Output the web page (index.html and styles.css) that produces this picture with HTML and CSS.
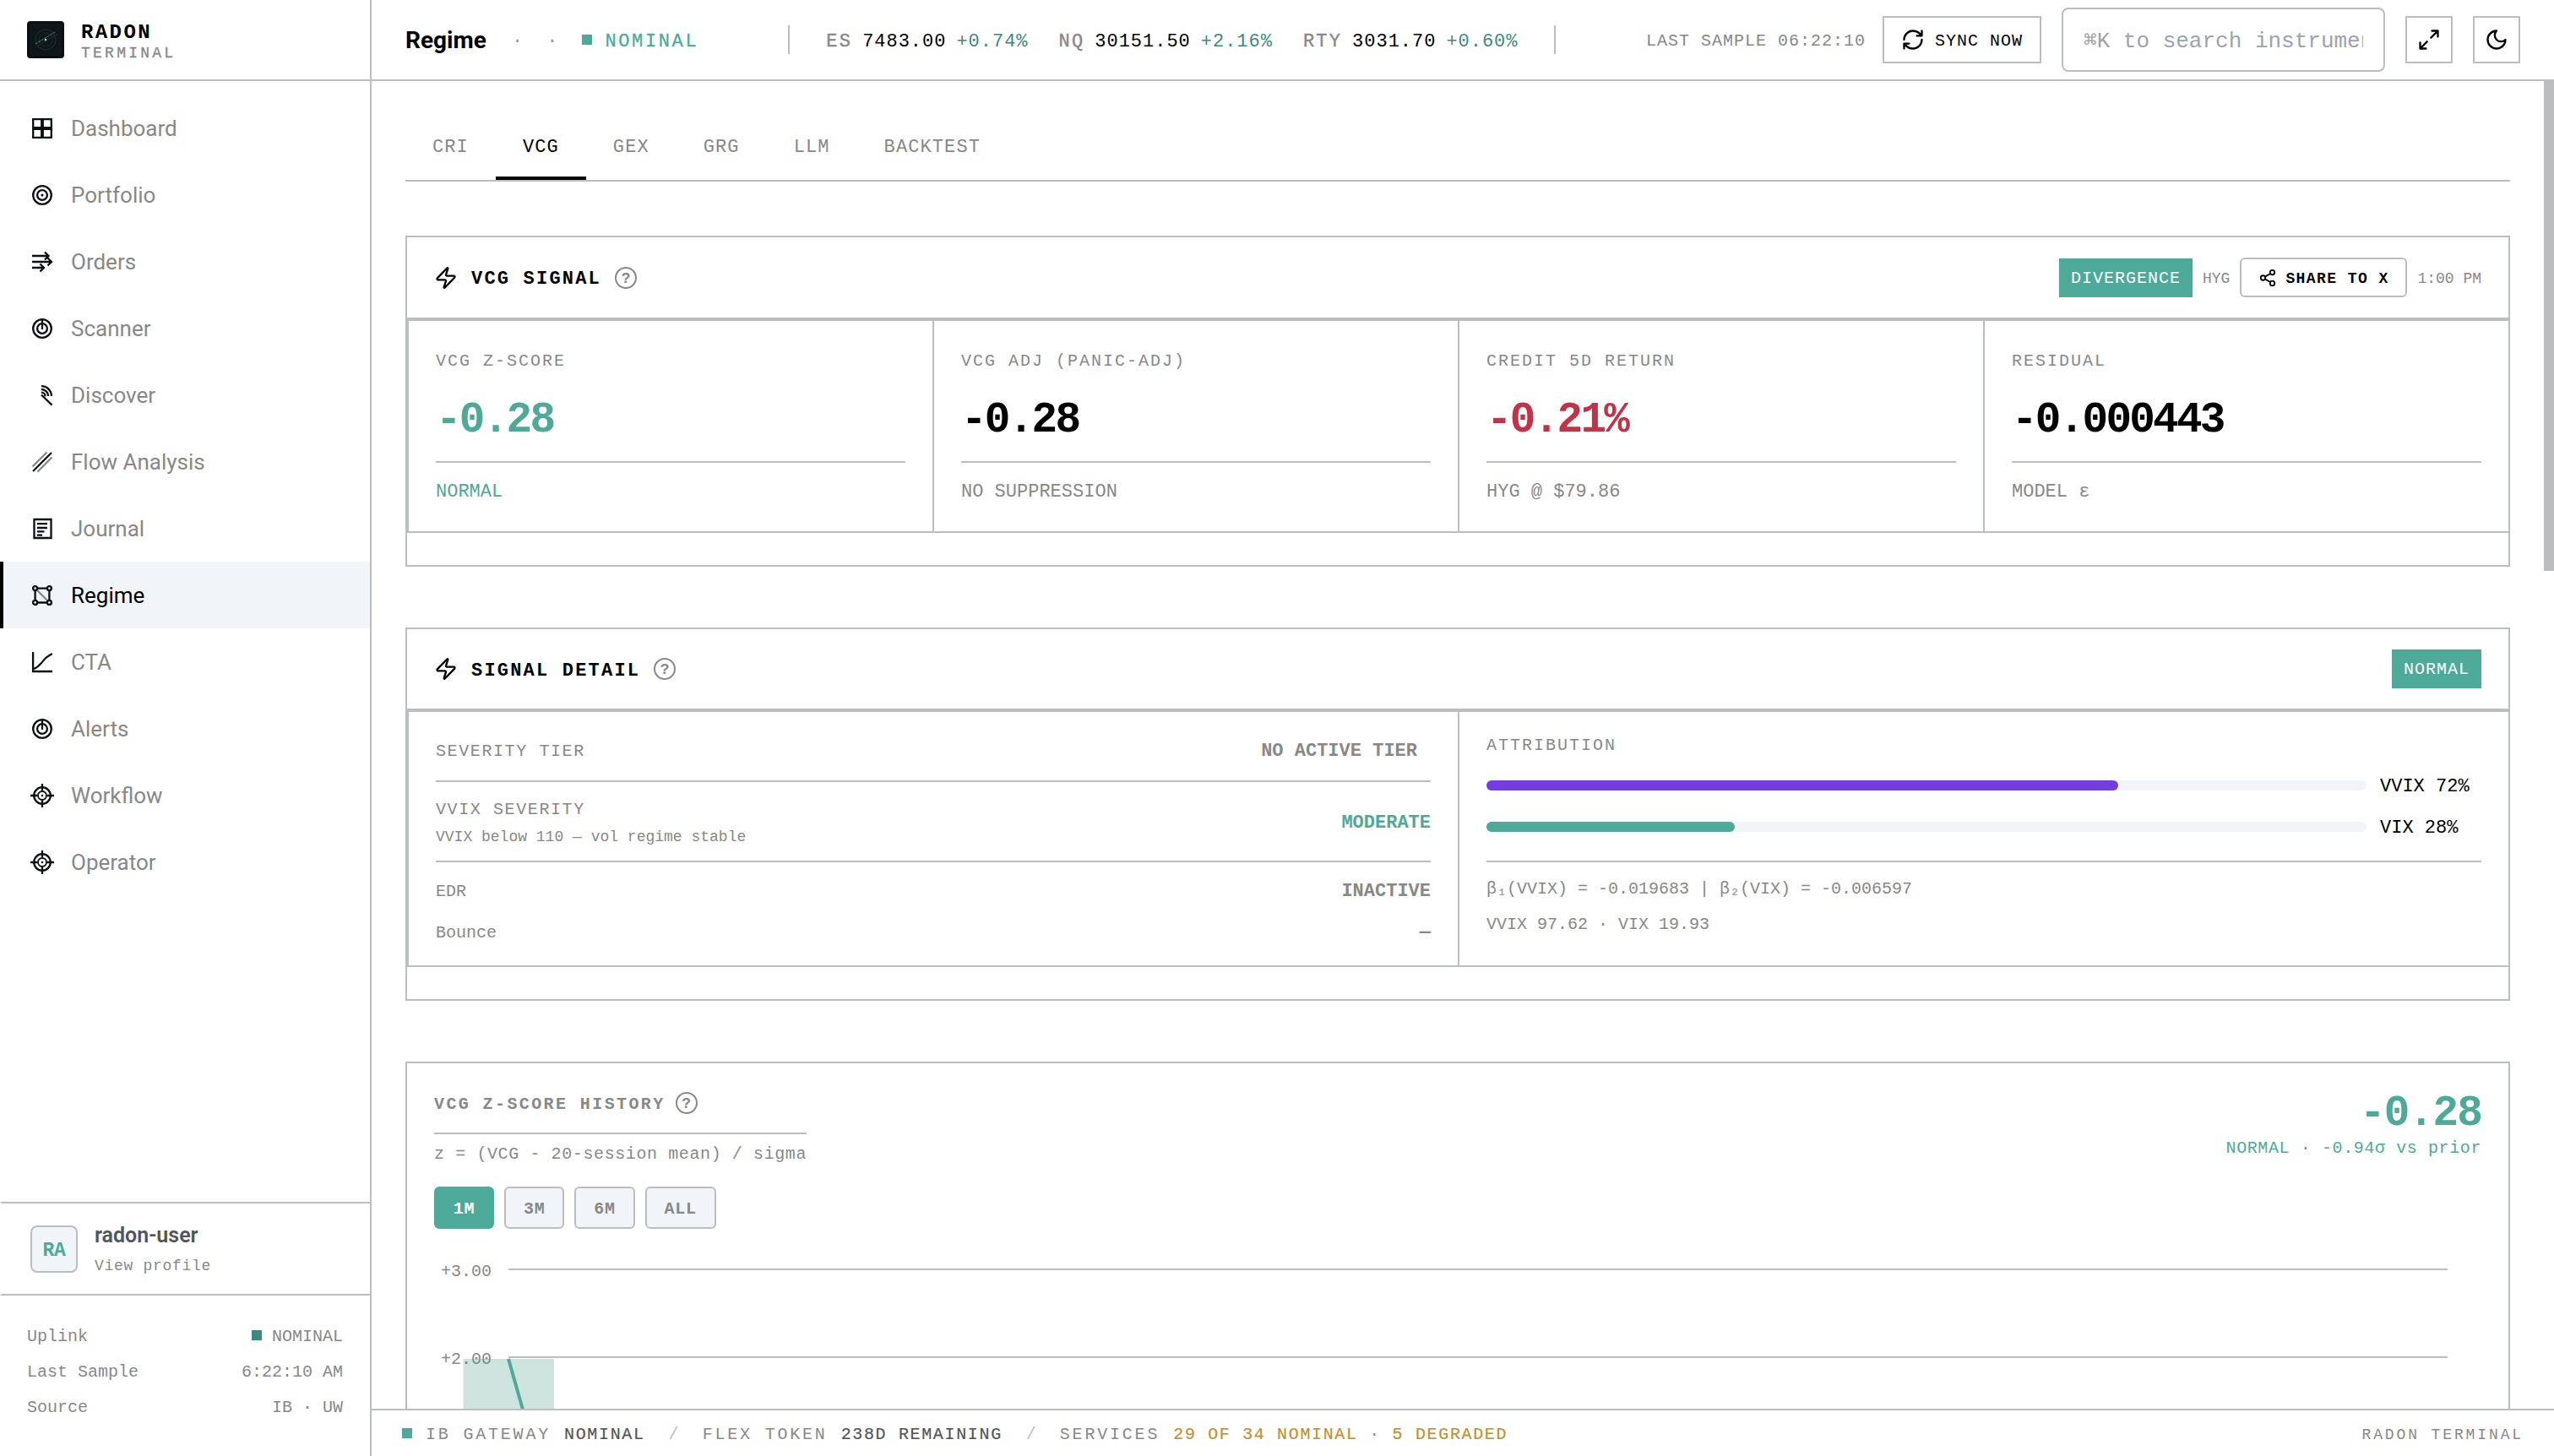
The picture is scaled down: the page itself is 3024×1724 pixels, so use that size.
FILE: index.html
```html
<!DOCTYPE html>
<html lang="en">
<head>
    <meta charset="UTF-8">
    <meta name="viewport" content="width=device-width, initial-scale=1.0">
    <title>Radon Terminal - Regime</title>
    <link rel="stylesheet" href="styles.css">
</head>
<body>
    <div class="app">
        <!-- sidebar -->
        <aside class="sidebar">
            <div class="brand">
                <svg class="logo" viewBox="0 0 44 44">
                    <rect width="44" height="44" rx="4" fill="#0a0f14"/>
                    <rect x="3" y="3" width="38" height="38" rx="2" fill="#0f1519"/>
                    <circle cx="22" cy="22" r="12" fill="none" stroke="#16392f"/>
                    <circle cx="22" cy="22" r="8" fill="none" stroke="#162b29"/>
                    <path d="M13 29L37 15" stroke="#33285a" stroke-dasharray="3 1"/>
                    <path d="M10 27L34 12.500" stroke="#2b7a69" stroke-width="1.200" stroke-dasharray="3 1"/>
                    <circle cx="22" cy="22" r="1.200" fill="#d5dede"/>
                </svg>
                <div class="brand_text">
                    <div class="brand_name">RADON</div>
                    <div class="brand_sub">TERMINAL</div>
                </div>
            </div>
            <nav class="nav">
                <a class="nav_item">
                    <svg viewBox="0 0 28 28"><path d="M3.200 3.200h21.600v21.600H3.200z"/><path d="M14 3v22M3 14h22" stroke-width="3.800"/></svg>
                    Dashboard
                </a>
                <a class="nav_item">
                    <svg viewBox="0 0 28 28"><circle cx="14" cy="14" r="10.800"/><circle cx="14" cy="14" r="5.900"/><circle class="dot" cx="14" cy="14" r="1.600"/></svg>
                    Portfolio
                </a>
                <a class="nav_item">
                    <svg viewBox="0 0 28 28"><path d="M2 7h20M17 2.500L21.500 7 17 11.500M2 14h23M20.500 9.500L25 14l-4.500 4.500M2 21h14M11.500 16.500L16 21l-4.500 4.500"/></svg>
                    Orders
                </a>
                <a class="nav_item">
                    <svg viewBox="0 0 28 28"><circle cx="14" cy="14" r="10.800"/><circle cx="14" cy="14" r="5.900"/><path d="M14 4v11"/></svg>
                    Scanner
                </a>
                <a class="nav_item">
                    <svg viewBox="0 0 28 28"><path d="M13 3.200A12 12 0 0 1 25 15M13 7A8.300 8.300 0 0 1 21.300 15M13 10.600A4.600 4.600 0 0 1 17.600 15.200M13 13.500L25.600 25.600"/></svg>
                    Discover
                </a>
                <a class="nav_item">
                    <svg viewBox="0 0 28 28"><path class="faint" d="M2.500 19.500l17-17M8.500 25.500l17-17"/><path d="M3 25L25 3"/></svg>
                    Flow Analysis
                </a>
                <a class="nav_item">
                    <svg viewBox="0 0 28 28"><path d="M4.500 3h20v22h-20zM8 8.200h12M8 13h12M8 17.300h8.500M8 21.600h6"/></svg>
                    Journal
                </a>
                <a class="nav_item active">
                    <svg viewBox="0 0 28 28"><path class="faint" d="M7.500 7.500l13 13"/><path d="M8.500 5.600h11M8.500 22.500h11M5.600 8.500v11M22.400 8.500v11"/><circle cx="5.600" cy="5.600" r="2.500"/><circle cx="22.400" cy="5.600" r="2.500"/><circle cx="5.600" cy="22.400" r="2.500"/><circle cx="22.400" cy="22.400" r="2.500"/></svg>
                    Regime
                </a>
                <a class="nav_item">
                    <svg viewBox="0 0 28 28"><path d="M3.100 2v23H26"/><path d="M3.500 22C8 21 10 18 13 15s4-6 8-8l4.800-3"/></svg>
                    CTA
                </a>
                <a class="nav_item">
                    <svg viewBox="0 0 28 28"><circle cx="14" cy="14" r="10.800"/><circle cx="14" cy="14" r="5.900"/><path d="M14 4v11"/></svg>
                    Alerts
                </a>
                <a class="nav_item">
                    <svg viewBox="0 0 28 28"><circle cx="14" cy="14" r="9.800"/><circle cx="14" cy="14" r="5" stroke-width="1.900"/><circle class="dot" cx="14" cy="14" r="1.300"/><path d="M14 0v8M14 20v8M0 14h8M20 14h8"/></svg>
                    Workflow
                </a>
                <a class="nav_item">
                    <svg viewBox="0 0 28 28"><circle cx="14" cy="14" r="9.800"/><circle cx="14" cy="14" r="5" stroke-width="1.900"/><circle class="dot" cx="14" cy="14" r="1.300"/><path d="M14 0v8M14 20v8M0 14h8M20 14h8"/></svg>
                    Operator
                </a>
            </nav>
            <div class="profile">
                <div class="avatar">RA</div>
                <div class="profile_text">
                    <div class="profile_name">radon-user</div>
                    <div class="profile_link">View profile</div>
                </div>
            </div>
            <div class="side_status">
                <div class="side_row"><span>Uplink</span><span class="side_value"><i class="square dark"></i>NOMINAL</span></div>
                <div class="side_row"><span>Last Sample</span><span>6:22:10 AM</span></div>
                <div class="side_row"><span>Source</span><span>IB · UW</span></div>
            </div>
        </aside>

        <div class="main">
            <!-- top bar -->
            <header class="topbar">
                <h1>Regime</h1>
                <span class="sep_dot">·</span>
                <span class="sep_dot">·</span>
                <div class="state"><i class="square"></i><span>NOMINAL</span></div>
                <div class="ticker">
                    <div class="quote"><span class="sym">ES</span><span class="px">7483.00</span><span class="chg">+0.74%</span></div>
                    <div class="quote"><span class="sym">NQ</span><span class="px">30151.50</span><span class="chg">+2.16%</span></div>
                    <div class="quote"><span class="sym">RTY</span><span class="px">3031.70</span><span class="chg">+0.60%</span></div>
                </div>
                <div class="tools">
                    <span class="sample">LAST SAMPLE 06:22:10</span>
                    <button class="sync">
                        <svg class="icon" viewBox="0 0 24 24"><path d="M3 12a9 9 0 0 1 9-9 9.750 9.750 0 0 1 6.740 2.740L21 8M21 3v5h-5M21 12a9 9 0 0 1-9 9 9.750 9.750 0 0 1-6.740-2.740L3 16M8 16H3v5"/></svg>
                        <span>SYNC NOW</span>
                    </button>
                    <input class="search" type="text" placeholder="⌘K to search instruments">
                    <button class="square_button"><svg class="icon" viewBox="0 0 24 24"><path d="M15 3h6v6M9 21H3v-6M21 3l-7 7M3 21l7-7"/></svg></button>
                    <button class="square_button"><svg class="icon" viewBox="0 0 24 24"><path d="M12 3a6 6 0 0 0 9 9 9 9 0 1 1-9-9Z"/></svg></button>
                </div>
            </header>

            <div class="scroller">
                <div class="content">
                    <div class="tabs">
                        <a class="tab">CRI</a>
                        <a class="tab active">VCG</a>
                        <a class="tab">GEX</a>
                        <a class="tab">GRG</a>
                        <a class="tab">LLM</a>
                        <a class="tab">BACKTEST</a>
                    </div>

                    <!-- VCG signal -->
                    <section class="card">
                        <div class="card_head">
                            <svg class="icon" viewBox="0 0 24 24"><path d="M4 14a1 1 0 0 1-.780-1.630l9.900-10.200a.5.5 0 0 1 .860.460l-1.920 6.020A1 1 0 0 0 13 10h7a1 1 0 0 1 .780 1.630l-9.900 10.200a.5.5 0 0 1-.860-.460l1.920-6.020A1 1 0 0 0 11 14z"/></svg>
                            <h2>VCG SIGNAL</h2>
                            <span class="help">?</span>
                            <div class="card_actions">
                                <span class="badge">DIVERGENCE</span>
                                <span class="small">HYG</span>
                                <button class="share">
                                    <svg class="icon" viewBox="0 0 24 24"><circle cx="18" cy="5" r="3"/><circle cx="6" cy="12" r="3"/><circle cx="18" cy="19" r="3"/><path d="M8.590 13.510l6.830 3.980M15.410 6.510l-6.820 3.980"/></svg>
                                    <span>SHARE TO X</span>
                                </button>
                                <span class="small">1:00 PM</span>
                            </div>
                        </div>
                        <div class="metrics">
                            <div class="metric">
                                <div class="label">VCG Z-SCORE</div>
                                <div class="value teal">-0.28</div>
                                <div class="note teal">NORMAL</div>
                            </div>
                            <div class="metric">
                                <div class="label">VCG ADJ (PANIC-ADJ)</div>
                                <div class="value">-0.28</div>
                                <div class="note">NO SUPPRESSION</div>
                            </div>
                            <div class="metric">
                                <div class="label">CREDIT 5D RETURN</div>
                                <div class="value red">-0.21%</div>
                                <div class="note">HYG @ $79.86</div>
                            </div>
                            <div class="metric">
                                <div class="label">RESIDUAL</div>
                                <div class="value">-0.000443</div>
                                <div class="note">MODEL ε</div>
                            </div>
                        </div>
                    </section>

                    <!-- signal detail -->
                    <section class="card">
                        <div class="card_head">
                            <svg class="icon" viewBox="0 0 24 24"><path d="M4 14a1 1 0 0 1-.780-1.630l9.900-10.200a.5.5 0 0 1 .860.460l-1.920 6.020A1 1 0 0 0 13 10h7a1 1 0 0 1 .780 1.630l-9.900 10.200a.5.5 0 0 1-.860-.460l1.920-6.020A1 1 0 0 0 11 14z"/></svg>
                            <h2>SIGNAL DETAIL</h2>
                            <span class="help">?</span>
                            <div class="card_actions"><span class="badge">NORMAL</span></div>
                        </div>
                        <div class="detail">
                            <div class="detail_col tiers">
                                <div class="tier first"><span class="tier_label">SEVERITY TIER</span><b class="inset">NO ACTIVE TIER</b></div>
                                <div class="tier second">
                                    <div>
                                        <div class="tier_label">VVIX SEVERITY</div>
                                        <div class="tier_note">VVIX below 110 — vol regime stable</div>
                                    </div>
                                    <b class="teal">MODERATE</b>
                                </div>
                                <div class="tier plain"><span>EDR</span><b>INACTIVE</b></div>
                                <div class="tier plain"><span>Bounce</span><b>—</b></div>
                            </div>
                            <div class="detail_col attribution">
                                <div class="label">ATTRIBUTION</div>
                                <div class="bar_row">
                                    <div class="track"><div class="fill violet" style="width:71.8%"></div></div>
                                    <span>VVIX 72%</span>
                                </div>
                                <div class="bar_row">
                                    <div class="track"><div class="fill" style="width:28.2%"></div></div>
                                    <span>VIX 28%</span>
                                </div>
                                <div class="betas">
                                    <div>β₁(VVIX) = -0.019683 | β₂(VIX) = -0.006597</div>
                                    <div>VVIX 97.62 · VIX 19.93</div>
                                </div>
                            </div>
                        </div>
                    </section>

                    <!-- z-score history -->
                    <section class="card history">
                        <div class="history_head">
                            <div>
                                <div class="history_title"><h3>VCG Z-SCORE HISTORY</h3><span class="help">?</span></div>
                                <div class="formula">z = (VCG - 20-session mean) / sigma</div>
                            </div>
                            <div class="reading">
                                <div class="reading_value">-0.28</div>
                                <div class="reading_note">NORMAL · -0.94σ vs prior</div>
                            </div>
                        </div>
                        <div class="ranges">
                            <button class="range active">1M</button>
                            <button class="range">3M</button>
                            <button class="range">6M</button>
                            <button class="range">ALL</button>
                        </div>
                        <svg class="chart" viewBox="0 0 2424 520">
                            <path class="grid" d="M88 48H2384M88 152H2384M88 256H2384M88 360H2384"/>
                            <text x="8" y="56">+3.00</text>
                            <text x="8" y="160">+2.00</text>
                            <rect class="band" x="34.500" y="154" width="107.500" height="360"/>
                            <path class="series" d="M88 154L105 214L142 350"/>
                        </svg>
                    </section>
                </div>
                <div class="scrollbar"><div class="thumb"></div></div>
            </div>

            <!-- status bar -->
            <footer class="statusbar">
                <i class="square"></i>
                <div class="status"><span>IB GATEWAY</span><b>NOMINAL</b></div>
                <span class="slash">/</span>
                <div class="status"><span>FLEX TOKEN</span><b>238D REMAINING</b></div>
                <span class="slash">/</span>
                <div class="status"><span>SERVICES</span><b class="amber">29 OF 34 NOMINAL · 5 DEGRADED</b></div>
                <span class="product">RADON TERMINAL</span>
            </footer>
        </div>
    </div>
</body>
</html>
```
FILE: styles.css
```css
*{
    box-sizing: border-box;
}
body{
    margin: 0;
    background-color: #fff;
    color: #000;
    font-family: "Liberation Mono", "DejaVu Sans Mono", monospace;
    font-size: 22px;
    overflow: hidden;
}
h1, h2, h3{
    margin: 0;
}
button{
    font-family: inherit;
    color: #000;
    background-color: #fff;
    border: 2px solid #babebe;
    display: flex;
    align-items: center;
    padding: 0;
}
.app{
    display: flex;
    width: 3024px;
    height: 1724px;
}
.icon{
    width: 28px;
    height: 28px;
    flex: none;
    fill: none;
    stroke: currentColor;
    stroke-width: 2;
    stroke-linecap: round;
    stroke-linejoin: round;
}
.square{
    width: 12px;
    height: 12px;
    flex: none;
    background-color: #4daa98;
}
.square.dark{
    background-color: #3d8a7c;
    margin-bottom: 4px;
}
.teal{
    color: #4daa98 !important;
}
.red{
    color: #c43247;
}

/* sidebar */
.sidebar{
    width: 440px;
    flex: none;
    display: flex;
    flex-direction: column;
    border-right: 2px solid #babebe;
}
.brand{
    height: 96px;
    padding: 0 32px;
    display: flex;
    align-items: center;
    gap: 20px;
    border-bottom: 2px solid #babebe;
}
.logo{
    width: 44px;
    height: 44px;
}
.brand_text{
    padding-top: 4px;
}
.brand_name{
    font-size: 24px;
    font-weight: bold;
    line-height: 27px;
    letter-spacing: 2.4px;
}
.brand_sub{
    font-size: 18px;
    line-height: 22px;
    letter-spacing: 3.24px;
    color: #888;
    -webkit-text-stroke: 0.3px #888;
}
.nav{
    flex: 1;
    padding-top: 16px;
}
.nav_item{
    height: 79px;
    padding-left: 32px;
    border-left: 4px solid transparent;
    display: flex;
    align-items: center;
    gap: 20px;
    font-family: Roboto, sans-serif;
    font-size: 26px;
    color: #888;
}
.nav_item svg{
    width: 28px;
    height: 28px;
    fill: none;
    stroke: #0a0f14;
    stroke-width: 2.3;
}
.nav_item .dot{
    fill: #0a0f14;
    stroke: none;
}
.nav_item .faint{
    stroke: #85878a;
}
.nav_item.active{
    color: #000;
    background-color: #f1f5fa;
    border-left-color: #000;
}
.profile{
    height: 111px;
    padding-left: 34px;
    display: flex;
    align-items: center;
    gap: 20px;
    border-top: 2px solid #babebe;
    border-bottom: 2px solid #babebe;
    border-left: 2px solid transparent;
}
.avatar{
    width: 56px;
    height: 56px;
    border: 2px solid #babebe;
    border-radius: 8px;
    background-color: #f1f5fa;
    color: #4daa98;
    font-size: 23px;
    font-weight: bold;
    line-height: 56px;
    letter-spacing: -0.4px;
    text-align: center;
}
.profile_text{
    padding-top: 2px;
}
.profile_name{
    font-family: Roboto, sans-serif;
    font-size: 25px;
    font-weight: 600;
    line-height: 30px;
    color: #555;
}
.profile_link{
    margin-top: 9px;
    font-size: 18px;
    line-height: 24px;
    letter-spacing: 0.7px;
    color: #888;
}
.side_status{
    height: 190px;
    padding: 28px 32px 0;
}
.side_row{
    display: flex;
    justify-content: space-between;
    font-size: 20px;
    line-height: 42px;
    color: #888;
}
.side_value{
    display: flex;
    align-items: center;
    gap: 12px;
}

/* top bar */
.main{
    flex: 1;
    min-width: 0;
    display: flex;
    flex-direction: column;
}
.topbar{
    height: 96px;
    flex: none;
    padding: 0 40px;
    display: flex;
    align-items: center;
    border-bottom: 2px solid #babebe;
}
.topbar h1{
    width: 98px;
    padding-top: 1px;
    font-family: Roboto, sans-serif;
    font-size: 28px;
    font-weight: 700;
    line-height: 34px;
}
.sep_dot{
    margin-left: 28px;
    padding-top: 4px;
    color: #999;
}
.state{
    margin-left: 29px;
    display: flex;
    align-items: center;
    gap: 15px;
    color: #4daa98;
    letter-spacing: 2.64px;
    -webkit-text-stroke: 0.3px #4daa98;
}
.state span, .quote{
    padding-top: 5px;
}
.ticker{
    height: 34px;
    margin-left: 106px;
    padding: 0 43px;
    display: flex;
    align-items: center;
    gap: 36px;
    border-left: 2px solid #babebe;
    border-right: 2px solid #babebe;
}
.quote{
    display: flex;
    letter-spacing: 0.98px;
}
.sym{
    margin-right: 12px;
    letter-spacing: 2.2px;
    color: #888;
    -webkit-text-stroke: 0.4px #888;
}
.px{
    margin-right: 12px;
}
.chg{
    color: #3d8a7c;
}
.tools{
    margin-left: auto;
    display: flex;
    align-items: center;
    gap: 24px;
    font-size: 20px;
}
.sample{
    margin-right: -4px;
    padding-top: 3px;
    letter-spacing: 1px;
    color: #888;
}
.sync{
    width: 188px;
    height: 56px;
    padding-left: 20px;
    gap: 12px;
    font-size: 20px;
    letter-spacing: 1px;
}
.sync span{
    padding-top: 3px;
    white-space: nowrap;
}
.search{
    width: 383px;
    height: 76px;
    margin: 0;
    padding: 4px 24px 0;
    border: 2px solid #babebe;
    border-radius: 8px;
    font-family: inherit;
    font-size: 26px;
}
.search::placeholder{
    color: #9ca3af;
}
.square_button{
    width: 56px;
    height: 56px;
    justify-content: center;
}

/* content */
.scroller{
    flex: 1;
    min-height: 0;
    display: flex;
    overflow: hidden;
}
.content{
    flex: 1;
    min-width: 0;
    padding: 40px 40px 0;
}
.scrollbar{
    width: 12px;
}
.thumb{
    height: 580px;
    background-color: #babebe;
}
.tabs{
    display: flex;
    border-bottom: 2px solid #babebe;
    margin-bottom: 64px;
}
.tab{
    padding: 24px 32px 19px;
    line-height: 30px;
    letter-spacing: 1.1px;
    color: #888;
    border-bottom: 4px solid transparent;
}
.tab.active{
    color: #000;
    border-bottom-color: #000;
}

/* cards */
.card{
    border: 2px solid #babebe;
    padding-bottom: 38px;
    margin-bottom: 72px;
}
.card_head{
    padding: 24px 32px;
    display: flex;
    align-items: center;
    border-bottom: 2px solid #babebe;
}
.card_head h2{
    margin: 0 16px;
    padding-top: 4px;
    font-size: 22px;
    letter-spacing: 2.2px;
}
.help{
    width: 26px;
    height: 26px;
    border: 2px solid #888;
    border-radius: 50%;
    color: #888;
    font-size: 18px;
    font-weight: bold;
    line-height: 24px;
    text-align: center;
}
.card_actions{
    margin-left: auto;
    display: flex;
    align-items: center;
    gap: 12px;
}
.badge{
    height: 46px;
    padding: 1px 14px 0;
    background-color: #4daa98;
    color: #fff;
    font-size: 20px;
    line-height: 46px;
    letter-spacing: 1px;
}
.small{
    padding-top: 2px;
    font-size: 18px;
    color: #888;
}
.share{
    width: 198px;
    height: 47px;
    padding-left: 20px;
    gap: 10px;
    border-radius: 6px;
    font-size: 18px;
    font-weight: bold;
    letter-spacing: 1.44px;
}
.share .icon{
    width: 22px;
    height: 22px;
}
.share span{
    padding-top: 2px;
    white-space: nowrap;
}

/* metric cells */
.metrics{
    display: grid;
    grid-template-columns: repeat(4, 1fr);
    border-top: 2px solid #babebe;
    border-bottom: 2px solid #babebe;
}
.metric{
    padding: 35px 32px 31px;
    border-left: 2px solid #babebe;
}
.label{
    font-size: 20px;
    line-height: 26px;
    letter-spacing: 2px;
    color: #888;
}
.value{
    margin-top: 28px;
    font-size: 51px;
    font-weight: bold;
    line-height: 58px;
    letter-spacing: -2.76px;
}
.note{
    margin-top: 19px;
    padding-top: 20px;
    border-top: 2px solid #babebe;
    line-height: 30px;
    color: #888;
}

/* detail cells */
.detail{
    display: grid;
    grid-template-columns: 1fr 1fr;
    border-top: 2px solid #babebe;
    border-bottom: 2px solid #babebe;
}
.detail_col{
    height: 300px;
    padding: 0 32px;
    border-left: 2px solid #babebe;
    color: #888;
}
.tier{
    display: flex;
    align-items: center;
    justify-content: space-between;
    line-height: 30px;
}
.tier.first{
    padding: 32px 0 19px;
    border-bottom: 2px solid #babebe;
}
.tier.second{
    padding: 19px 0 14px;
    border-bottom: 2px solid #babebe;
    line-height: 28px;
}
.tier.plain{
    padding-top: 20px;
}
.tier.plain + .plain{
    padding-top: 19px;
}
.tier.plain span{
    font-size: 20px;
}
.tier_label{
    font-size: 20px;
    letter-spacing: 1.6px;
}
.tier_note{
    margin-top: 4px;
    font-size: 18px;
}
.inset{
    padding-right: 16px;
}
.attribution{
    padding-top: 26px;
}
.attribution .label{
    height: 29px;
    line-height: 28px;
}
.bar_row{
    height: 34px;
    margin-top: 15px;
    display: flex;
    align-items: center;
    gap: 16px;
}
.bar_row span{
    width: 120px;
    padding-top: 4px;
    line-height: 30px;
    color: #000;
}
.track{
    flex: 1;
    height: 12px;
    border-radius: 6px;
    background-color: #f1f5fa;
}
.fill{
    height: 12px;
    border-radius: 6px;
    background-color: #4daa98;
}
.fill.violet{
    background-color: #743de0;
}
.betas{
    margin-top: 23px;
    padding-top: 18px;
    border-top: 2px solid #babebe;
    display: flex;
    flex-direction: column;
    gap: 14px;
    font-size: 20px;
    line-height: 28px;
}

/* history card */
.history{
    padding: 32px 32px 0;
}
.history_head{
    display: flex;
    justify-content: space-between;
}
.history_title{
    height: 52px;
    padding-bottom: 20px;
    display: flex;
    align-items: center;
    gap: 12px;
    border-bottom: 2px solid #babebe;
    color: #888;
}
.history_title h3{
    padding-top: 4px;
    font-size: 20px;
    line-height: 26px;
    letter-spacing: 2.4px;
}
.formula{
    margin-top: 10px;
    font-size: 20px;
    line-height: 28px;
    letter-spacing: 0.6px;
    color: #888;
}
.reading{
    text-align: right;
    color: #4daa98;
}
.reading_value{
    font-size: 51px;
    font-weight: bold;
    line-height: 55px;
    letter-spacing: -1.8px;
}
.reading_note{
    font-size: 20px;
    line-height: 28px;
    letter-spacing: 0.6px;
}
.ranges{
    margin-top: 24px;
    display: flex;
    gap: 12px;
}
.range{
    height: 50px;
    padding: 2px 20.8px 0;
    border-radius: 6px;
    background-color: #f1f5fa;
    color: #888;
    font-size: 20px;
    font-weight: bold;
    letter-spacing: 0.8px;
}
.range.active{
    background-color: #4daa98;
    border-color: #4daa98;
    color: #fff;
}
.chart{
    display: block;
    width: 2424px;
    height: 520px;
}
.chart .grid{
    stroke: #babebe;
    stroke-width: 2;
}
.chart text{
    font-size: 20px;
    fill: #888;
}
.chart .band{
    fill: #3d8a7c;
    fill-opacity: 0.25;
}
.chart .series{
    fill: none;
    stroke: #4daa98;
    stroke-width: 4;
}

/* status bar */
.statusbar{
    height: 56px;
    flex: none;
    padding: 0 36px;
    display: flex;
    align-items: center;
    border-top: 2px solid #babebe;
    font-size: 20px;
    color: #888;
}
.statusbar .square{
    margin-right: 16px;
}
.status{
    display: flex;
    gap: 16px;
    padding-top: 3px;
    letter-spacing: 2.8px;
}
.status b{
    font-weight: normal;
    letter-spacing: 1.65px;
    color: #555;
    -webkit-text-stroke: 0.2px;
}
.status .amber{
    color: #c6902a;
}
.slash{
    margin: 0 28px;
    padding-top: 3px;
    color: #babebe;
}
.product{
    margin-left: auto;
    padding-top: 3px;
    font-size: 18px;
    letter-spacing: 2.88px;
}
```
